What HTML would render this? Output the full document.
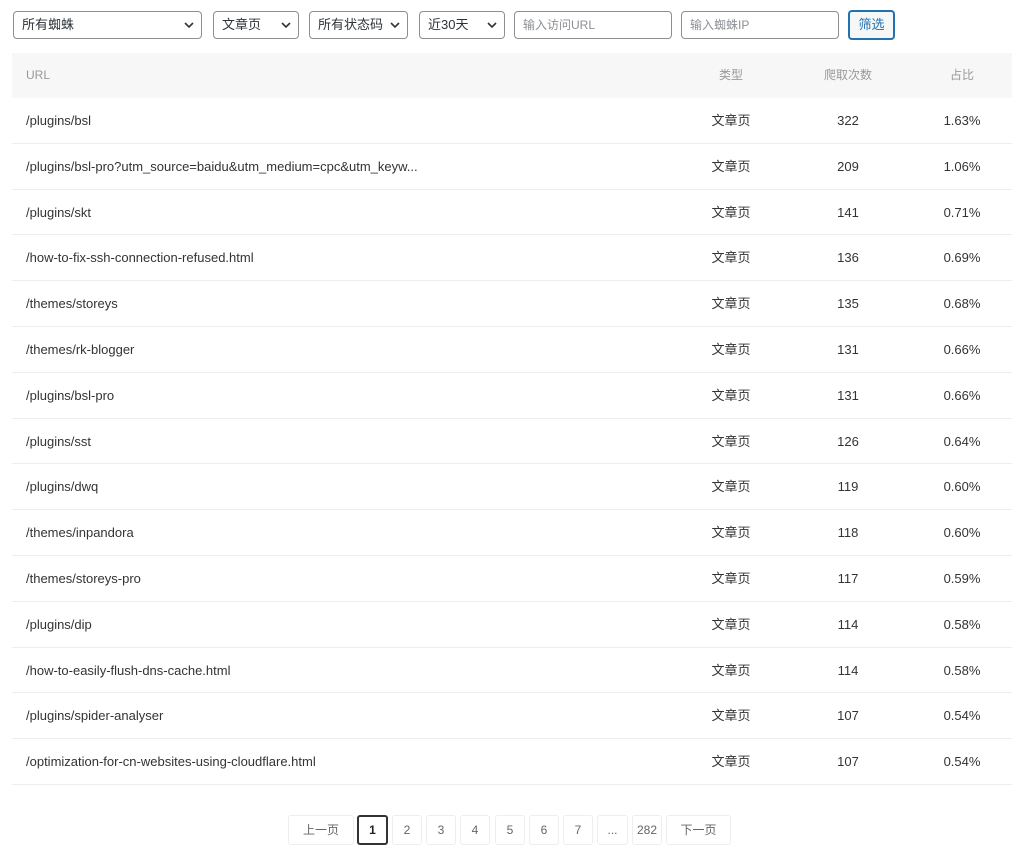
<!DOCTYPE html>
<html><head><meta charset="utf-8"><style>
body{margin:0;background:#fff;font-family:"Liberation Sans","Noto Sans CJK SC",sans-serif;font-size:13px;color:#333;}
.f{position:absolute;top:11px;border:1px solid #8c8f94;border-radius:4px;box-sizing:border-box;height:28px;line-height:26px;padding-left:8px;font-size:13px;color:#2c3338;background:#fff;overflow:hidden}
.f svg{position:absolute;right:7px;top:10px}
.i{color:#8c8f94;font-size:12px}
.btn{position:absolute;left:848px;top:10px;width:47px;height:30px;box-sizing:border-box;border:2px solid #2271b1;border-radius:4px;background:#f6f7f7;color:#2271b1;text-align:center;line-height:26px;font-size:13px}
.t{position:absolute;left:12px;top:53px;width:1000px}
.r{position:relative;height:45.8px;border-bottom:1px solid #eee;box-sizing:border-box}
.h{background:#f7f7f7;color:#999;font-size:12px;border:0;height:45px}
.r span{position:absolute;top:0;line-height:45px;white-space:nowrap}
.r span:nth-child(1){left:14px}
.r span:nth-child(2){left:659px;width:120px;text-align:center}
.r span:nth-child(3){left:776px;width:120px;text-align:center}
.r span:nth-child(4){left:890px;width:120px;text-align:center}
.p{position:absolute;top:815px;height:30px;box-sizing:border-box;border:1px solid #eee;border-radius:3px;text-align:center;line-height:28px;color:#666;font-size:12px}
.cur{border:2px solid #333;color:#222;font-weight:bold;line-height:26px}
</style></head><body>
<div class="f" style="left:13px;width:189px">所有蜘蛛<svg width="10" height="7"><path d="M1 1l4 4 4-4" stroke="#333" stroke-width="1.6" fill="none"/></svg></div>
<div class="f" style="left:213px;width:86px">文章页<svg width="10" height="7"><path d="M1 1l4 4 4-4" stroke="#333" stroke-width="1.6" fill="none"/></svg></div>
<div class="f" style="left:309px;width:99px">所有状态码<svg width="10" height="7"><path d="M1 1l4 4 4-4" stroke="#333" stroke-width="1.6" fill="none"/></svg></div>
<div class="f" style="left:419px;width:86px">近30天<svg width="10" height="7"><path d="M1 1l4 4 4-4" stroke="#333" stroke-width="1.6" fill="none"/></svg></div>
<div class="f i" style="left:514px;width:158px">输入访问URL</div>
<div class="f i" style="left:681px;width:158px">输入蜘蛛IP</div>
<div class="btn">筛选</div>
<div class="t">
<div class="r h"><span>URL</span><span>类型</span><span>爬取次数</span><span>占比</span></div>
<div class="r"><span>/plugins/bsl</span><span>文章页</span><span>322</span><span>1.63%</span></div>
<div class="r"><span>/plugins/bsl-pro?utm_source=baidu&amp;utm_medium=cpc&amp;utm_keyw...</span><span>文章页</span><span>209</span><span>1.06%</span></div>
<div class="r"><span>/plugins/skt</span><span>文章页</span><span>141</span><span>0.71%</span></div>
<div class="r"><span>/how-to-fix-ssh-connection-refused.html</span><span>文章页</span><span>136</span><span>0.69%</span></div>
<div class="r"><span>/themes/storeys</span><span>文章页</span><span>135</span><span>0.68%</span></div>
<div class="r"><span>/themes/rk-blogger</span><span>文章页</span><span>131</span><span>0.66%</span></div>
<div class="r"><span>/plugins/bsl-pro</span><span>文章页</span><span>131</span><span>0.66%</span></div>
<div class="r"><span>/plugins/sst</span><span>文章页</span><span>126</span><span>0.64%</span></div>
<div class="r"><span>/plugins/dwq</span><span>文章页</span><span>119</span><span>0.60%</span></div>
<div class="r"><span>/themes/inpandora</span><span>文章页</span><span>118</span><span>0.60%</span></div>
<div class="r"><span>/themes/storeys-pro</span><span>文章页</span><span>117</span><span>0.59%</span></div>
<div class="r"><span>/plugins/dip</span><span>文章页</span><span>114</span><span>0.58%</span></div>
<div class="r"><span>/how-to-easily-flush-dns-cache.html</span><span>文章页</span><span>114</span><span>0.58%</span></div>
<div class="r"><span>/plugins/spider-analyser</span><span>文章页</span><span>107</span><span>0.54%</span></div>
<div class="r"><span>/optimization-for-cn-websites-using-cloudflare.html</span><span>文章页</span><span>107</span><span>0.54%</span></div>
</div>
<div class="p" style="left:288px;width:66px">上一页</div>
<div class="p cur" style="left:357px;width:31px">1</div>
<div class="p" style="left:392px;width:30px">2</div>
<div class="p" style="left:426px;width:30px">3</div>
<div class="p" style="left:460px;width:30px">4</div>
<div class="p" style="left:495px;width:30px">5</div>
<div class="p" style="left:529px;width:30px">6</div>
<div class="p" style="left:563px;width:30px">7</div>
<div class="p" style="left:597px;width:31px">...</div>
<div class="p" style="left:632px;width:30px">282</div>
<div class="p" style="left:666px;width:65px">下一页</div>
</body></html>
